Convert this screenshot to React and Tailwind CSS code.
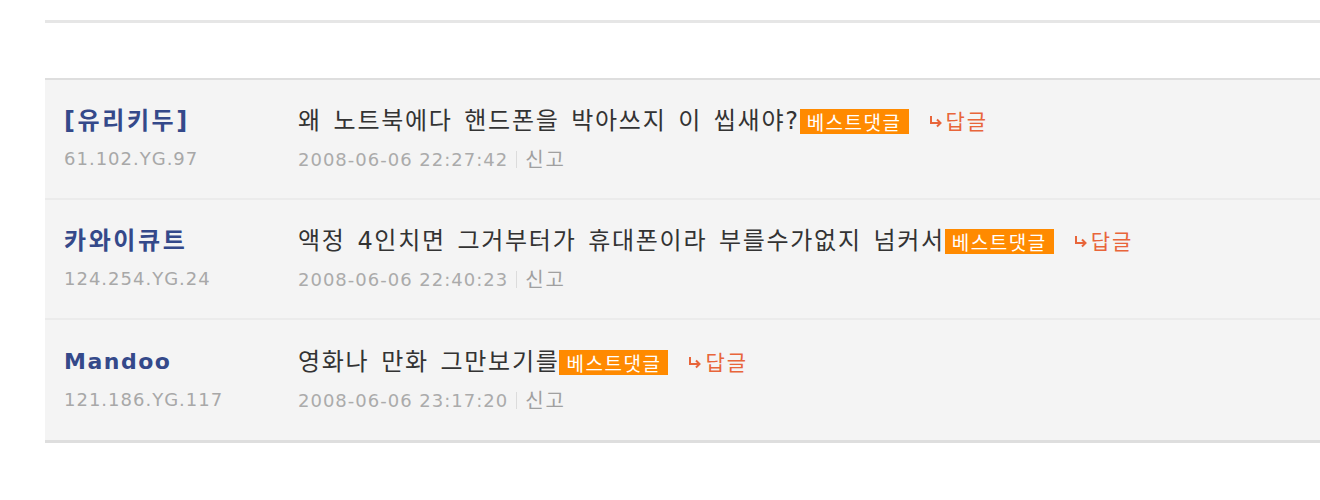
const comments = [
    {
        name: "[유리키두]",
        ip: "61.102.YG.97",
        text: "왜 노트북에다 핸드폰을 박아쓰지 이 씹새야?",
        date: "2008-06-06 22:27:42",
    },
    {
        name: "카와이큐트",
        ip: "124.254.YG.24",
        text: "액정 4인치면 그거부터가 휴대폰이라 부를수가없지 넘커서",
        date: "2008-06-06 22:40:23",
    },
    {
        name: "Mandoo",
        ip: "121.186.YG.117",
        text: "영화나 만화 그만보기를",
        date: "2008-06-06 23:17:20",
        latin: true,
    },
];

const kr = "font-['DejaVu_Sans','Noto_Sans_CJK_KR',sans-serif]";

function CommentRow({ c, last }) {
    return (
        <div className={`flex h-[120px] items-center pl-[19px] ${last ? "" : "border-b-2 border-[#ebebeb]"}`}>
            <div className="w-[234px] flex flex-col gap-[12px]">
                <span className={`${kr} leading-[28px] font-bold text-[#34498a] ${c.latin ? "text-[22px] tracking-[1.5px]" : "text-[24px] tracking-[2.6px]"}`}>
                    {c.name}
                </span>
                <span className={`${kr} text-[18px] leading-[24px] text-[#a8a8a8] tracking-[1px]`}>
                    {c.ip}
                </span>
            </div>
            <div className="flex flex-col gap-[12px]">
                <div className="flex items-center h-[28px]">
                    <span className={`${kr} text-[24px] text-[#333] tracking-[1.7px] [word-spacing:2.5px]`}>
                        {c.text}
                    </span>
                    <span className="font-['Noto_Sans_CJK_KR',sans-serif] bg-[#ff8a00] text-white text-[19px] leading-[25px] px-[7px] tracking-[1.5px]">
                        베스트댓글
                    </span>
                    <span className="ml-[20px] flex items-center gap-[3px] text-[#e8653a] font-['Noto_Sans_CJK_KR',sans-serif] text-[21px] tracking-[2px]">
                        <svg width="14" height="14" viewBox="0 0 14 14" fill="none" stroke="#e8653a" strokeWidth="2">
                            <path d="M2 2v7h9" />
                            <path d="M8 5.5l3.5 3.5-3.5 3.5" />
                        </svg>
                        답글
                    </span>
                </div>
                <div className={`${kr} flex items-center h-[24px] text-[18px]`}>
                    <span className="text-[#ababab] tracking-[1px]">{c.date}</span>
                    <span className="mx-[8px] w-px h-[17px] bg-[#dcdcdc]" />
                    <span className="font-['Noto_Sans_CJK_KR',sans-serif] text-[#a0a0a0] text-[20px] tracking-[2px]">신고</span>
                </div>
            </div>
        </div>
    );
}

export default function App() {
    return (
        <div className="w-[1320px] h-[500px] bg-white overflow-hidden">
            <div className="ml-[45px] pt-[20px]">
                <div className="h-[3px] bg-[#e6e6e6]" />
                <div className="mt-[55px] border-t-2 border-b-[3px] border-[#dedede] bg-[#f4f4f4]">
                    {comments.map((c, i) => (
                        <CommentRow key={i} c={c} last={i === comments.length - 1} />
                    ))}
                </div>
            </div>
        </div>
    );
}
